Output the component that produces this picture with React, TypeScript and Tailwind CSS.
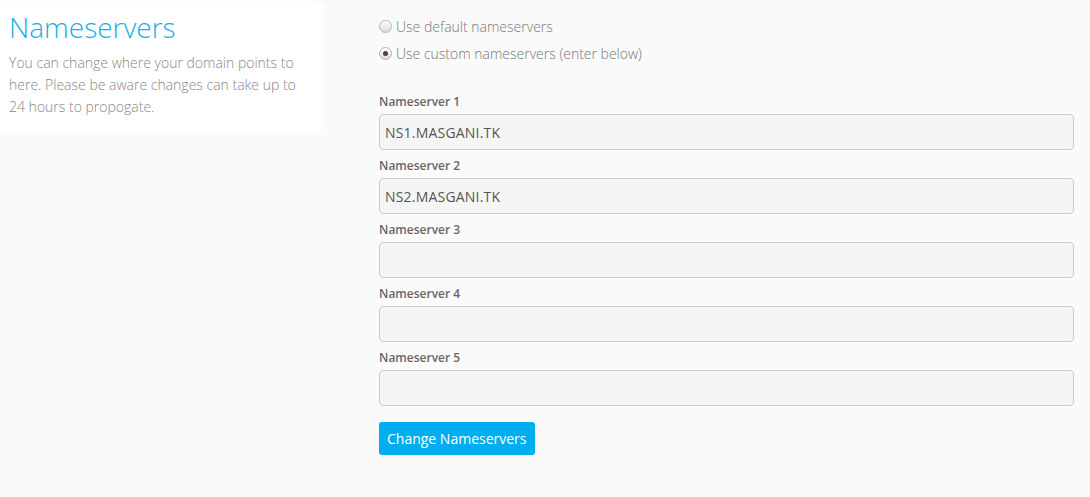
import { useState } from "react";

const font = "font-['Open_Sans',_'Liberation_Sans',_sans-serif]";

function Radio({ checked, label, onSelect }: { checked: boolean; label: string; onSelect: () => void }) {
  return (
    <label className="flex items-center h-[27px] cursor-pointer" onClick={onSelect}>
      <span className="flex items-center justify-center w-[13px] h-[13px] rounded-full border border-[#b4b4b4] bg-gradient-to-b from-[#ffffff] to-[#dcdcdc] mr-[4px]">
        {checked && <span className="block w-[5px] h-[5px] rounded-full bg-[#444]" />}
      </span>
      <span className="text-[14px] font-light text-[#777]">{label}</span>
    </label>
  );
}

const servers = ["NS1.MASGANI.TK", "NS2.MASGANI.TK", "", "", ""];

export default function App() {
  const [mode, setMode] = useState<"default" | "custom">("custom");
  const [values, setValues] = useState(servers);

  return (
    <div className={`${font} flex bg-[#fafafa] h-[497px] w-full`}>
      <div className="w-[379px] shrink-0">
        <div className="w-[324px] bg-white rounded-tr-[6px] rounded-br-[6px] mt-[1px] pl-[9px] pr-[12px] pt-[11px] pb-[14px]">
          <h1 className="text-[28px] leading-[31px] font-light text-[#15b0ea]">Nameservers</h1>
          <p className="mt-[9px] text-[14px] leading-[22px] font-light text-[#888]">
            You can change where your domain points to here. Please be aware changes can take up to 24 hours to propogate.
          </p>
        </div>
      </div>

      <div className="flex-1 pr-[16px] pt-[13px]">
        <Radio checked={mode === "default"} label="Use default nameservers" onSelect={() => setMode("default")} />
        <Radio checked={mode === "custom"} label="Use custom nameservers (enter below)" onSelect={() => setMode("custom")} />

        <div className="mt-[26px]">
          {values.map((v, i) => (
            <div key={i} className="mb-[7px]">
              <div className="text-[12px] leading-[18px] font-semibold text-[#666] mb-[3px]">Nameserver {i + 1}</div>
              <input
                value={v}
                onChange={(e) => setValues(values.map((x, j) => (j === i ? e.target.value : x)))}
                className="block w-full h-[36px] px-[5px] rounded-[4px] border border-[#cccccc] bg-[#f5f5f5] text-[14px] tracking-[0.2px] text-[#555] outline-none"
              />
            </div>
          ))}
        </div>

        <button className="mt-[9px] h-[33px] px-[8px] rounded-[3px] bg-[#00aeef] text-white text-[14px] leading-[20px]">
          Change Nameservers
        </button>
      </div>
    </div>
  );
}
